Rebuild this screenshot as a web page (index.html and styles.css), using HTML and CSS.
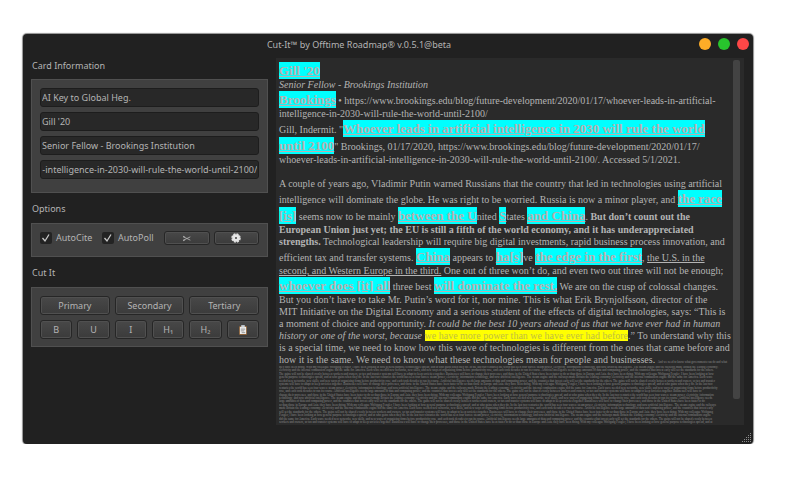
FILE: index.html
```html
<!DOCTYPE html>
<html lang="en">
<head>
<meta charset="utf-8">
<title>Cut-It</title>
<link rel="stylesheet" href="styles.css">
</head>
<body>
<main class="window">
  <header class="titlebar">
    <h1 class="title">Cut-It™ by Offtime Roadmap® v.0.5.1@beta</h1>
    <div class="controls">
      <button class="dot amber" aria-label="Minimize"></button>
      <button class="dot green" aria-label="Maximize"></button>
      <button class="dot red" aria-label="Close"></button>
    </div>
  </header>
  <div class="content">
    <div class="sidebar">
      <h2 class="heading">Card Information</h2>
      <section class="panel fields">
        <input class="field" aria-label="Tag" value="AI Key to Global Heg.">
        <input class="field" aria-label="Author" value="Gill '20">
        <input class="field" aria-label="Credentials" value="Senior Fellow - Brookings Institution">
        <input class="field" id="link" aria-label="Link" value="al-intelligence-in-2030-will-rule-the-world-until-2100/">
      </section>
      <h2 class="heading">Options</h2>
      <section class="panel options">
        <label class="check"><input type="checkbox" checked>AutoCite</label>
        <label class="check"><input type="checkbox" checked>AutoPoll</label>
        <button class="btn slim" aria-label="Cut">
          <svg width="10" height="7" viewBox="0 0 12 8" fill="none" stroke="#b4b4b4"><path d="M3.5 2.8 10 6M3.5 5.2 10 2"/><path d="M1.5 1.5 3.5 2.8M1.5 6.5 3.5 5.2" stroke-width="1.6"/></svg>
        </button>
        <button class="btn slim" aria-label="Settings">
          <svg width="10" height="10" viewBox="0 0 10 10"><circle cx="5" cy="5" r="4" fill="none" stroke="#dcdcdc" stroke-width="1.6" stroke-dasharray="2.1 1.04"/><circle cx="5" cy="5" r="2.4" fill="none" stroke="#e6e6e6" stroke-width="2.8"/></svg>
        </button>
      </section>
      <h2 class="heading">Cut It</h2>
      <section class="panel cuts">
        <div class="row">
          <button class="btn">Primary</button>
          <button class="btn">Secondary</button>
          <button class="btn">Tertiary</button>
        </div>
        <div class="row">
          <button class="btn">B</button>
          <button class="btn">U</button>
          <button class="btn">I</button>
          <button class="btn">H₁</button>
          <button class="btn">H₂</button>
          <button class="btn" aria-label="Paste">
            <svg width="8" height="10" viewBox="0 0 9 11"><rect x="0" y="1" width="9" height="10" rx="1" fill="#8a6038"/><path d="M1 2H8V10H1Z" fill="#eee"/><path d="M2.5 0H6.5V2.5H2.5Z" fill="#c9d0d6"/><path d="M2 4.5H7M2 6.5H6M3 8.5H7" stroke="#777" stroke-width=".8"/></svg>
          </button>
        </div>
      </section>
    </div>
    <article class="document">
      <div class="text">
        <p class="tall"><mark>Gill '20</mark></p>
        <p><i>Senior Fellow - Brookings Institution</i></p>
        <p class="tall"><mark>Brookings</mark> • https://www.brookings.edu/blog/future-development/2020/01/17/whoever-leads-in-artificial-</p>
        <p>intelligence-in-2030-will-rule-the-world-until-2100/</p>
        <p class="tall">Gill, Indermit. "<mark>Whoever leads in artificial intelligence in 2030 will rule the world</mark></p>
        <p class="tall"><mark>until 2100</mark>" Brookings, 01/17/2020, https://www.brookings.edu/blog/future-development/2020/01/17/</p>
        <p>whoever-leads-in-artificial-intelligence-in-2030-will-rule-the-world-until-2100/. Accessed 5/1/2021.</p>
        <p><br></p>
        <p>A couple of years ago, Vladimir Putin warned Russians that the country that led in technologies using artificial</p>
        <p class="tall">intelligence will dominate the globe. He was right to be worried. Russia is now a minor player, and <mark>the race</mark></p>
        <p class="tall"><mark>[is]</mark> seems now to be mainly <mark>between the U</mark>nited <mark>S</mark>tates <mark>and China</mark>. <b>But don’t count out the</b></p>
        <p><b>European Union just yet; the EU is still a fifth of the world economy, and it has underappreciated</b></p>
        <p><b>strengths.</b> Technological leadership will require big digital investments, rapid business process innovation, and</p>
        <p class="tall">efficient tax and transfer systems. <mark>China</mark> appears to <mark>ha[s]</mark>ve <mark>the edge in the first</mark>, <u>the U.S. in the</u></p>
        <p><u>second, and Western Europe in the third.</u> One out of three won’t do, and even two out three will not be enough;</p>
        <p class="tall"><mark>whoever does [it] all</mark> three best <mark>will dominate the rest.</mark> We are on the cusp of colossal changes.</p>
        <p>But you don’t have to take Mr. Putin’s word for it, nor mine. This is what Erik Brynjolfsson, director of the</p>
        <p>MIT Initiative on the Digital Economy and a serious student of the effects of digital technologies, says: “This is</p>
        <p>a moment of choice and opportunity. <i>It could be the best 10 years ahead of us that we have ever had in human</i></p>
        <p><i>history or one of the worst, because </i><span class="pick">we have more power than we have ever had before</span>.” To understand why this</p>
        <p>is a special time, we need to know how this wave of technologies is different from the ones that came before and</p>
        <p>how it is the same. We need to know what these technologies mean for people and businesses. <span class="tiny">And we need to know what governments can do and what</span></p>
        <div class="tiny rest" id="rest"></div>
      </div>
      <div class="scrollbar"><div class="thumb"></div></div>
    </article>
  </div>
  <svg class="grip" width="10" height="10" viewBox="0 0 10 10" fill="#8a8a8a"><path d="M8 0h1v1h-1zM8 2h1v1h-1zM6 2h1v1h-1zM8 4h1v1h-1zM6 4h1v1h-1zM4 4h1v1h-1zM8 6h1v1h-1zM6 6h1v1h-1zM4 6h1v1h-1zM2 6h1v1h-1zM8 8h1v1h-1zM6 8h1v1h-1zM4 8h1v1h-1zM2 8h1v1h-1zM0 8h1v1h-1z"/></svg>
</main>
<script src="document.js"></script>
</body>
</html>
```
FILE: document.js
```js
// Fills the shrunken, uncut remainder of the card, one paragraph per line.
const sentences = [
  "they have been doing. With my colleague Wolfgang Fengler, I have been looking at how general purpose technologies spread, and at who gains when they do.",
  "In the last two centuries the world has seen four waves: steam power, electricity, information technology, and now artificial intelligence.",
  "The steam engine and the railways made Britain the leading economy; electricity and the internal combustion engine did the same for America.",
  "Each wave needed new networks, new skills, and new ways of organizing firms before productivity rose, and each took decades to run its course.",
  "Artificial intelligence needs large amounts of data and computing power, and the countries that invest early will set the standards for the others.",
  "The gains will not be shared evenly between workers and owners, so tax and transfer systems will have to adapt to keep societies together.",
  "Businesses will have to change their processes, and those in the United States have been faster to do so than those in Europe and Asia."
];
const words = sentences.join(" ").split(" ");
const rest = document.getElementById("rest");
let next = 0;
for (let row = 0; row < 17; row++) {
  let line = "";
  while (line.length < 358) line += words[next++ % words.length] + " ";
  const p = document.createElement("div");
  p.textContent = line.trim();
  rest.append(p);
}

// Keeps the end of a long link in view.
const link = document.getElementById("link");
link.scrollLeft = link.scrollWidth;
```
FILE: styles.css
```css
*{box-sizing:border-box}
body{margin:0;background:#fff;padding:34px 47px 0 23px;font:9px/12px "Noto Sans",sans-serif;color:#b4b4b4}
h1,h2,p{margin:0;font-size:inherit;font-weight:normal}
button,input{font:inherit;color:inherit;margin:0;padding:0}
.window{position:relative;background:#212121;border-radius:4px;padding-bottom:19px;box-shadow:0 0 1px 1px #00000070}
.titlebar{display:grid;grid-template-columns:1fr auto 1fr;height:24px;padding:0 4px 0 0}
.title{grid-column:2;padding:5px 54px 0 0}
.controls{display:flex;justify-content:flex-end;gap:7px;padding-top:4px}
.dot{width:12px;height:12px;border:0;border-radius:50%}
.amber{background:#fdac27}
.green{background:#28c42d}
.red{background:#fd4747}
.content{display:flex;gap:8px;padding:0 9px 0 8px}
.sidebar{flex:0 0 237px}
.heading{height:30px;padding:10px 0 0 1px}
.heading:first-child{height:21px;padding-top:2px}
.panel{background:#404040;border:1px solid #505050;padding:8px}
.fields{display:grid;gap:5px;height:114px;align-content:start}
.field{width:100%;height:19px;padding:0 1px;background:#282828;border:1px solid #1d1d1d;border-radius:3px}
.options{display:flex;align-items:flex-start;gap:4px;height:34px;padding-top:7px}
.check{display:flex;align-items:center;gap:4px;flex:0 0 58px;height:14px;white-space:nowrap}
.check input{appearance:none;width:12px;height:12px;background:#232323 url("data:image/svg+xml,%3Csvg xmlns='http://www.w3.org/2000/svg' viewBox='0 0 12 12'%3E%3Cpath d='M2.5 6 5 9 9 2.5' fill='none' stroke='%23c8c8c8' stroke-width='1.3'/%3E%3C/svg%3E");border-radius:2px}
.btn{flex:1 1 0;height:19px;display:flex;align-items:center;justify-content:center;background:linear-gradient(#484848,#3b3b3b);border:1px solid #262626;border-radius:3px;box-shadow:inset 0 0 0 1px #505050}
.slim{height:14px}
.cuts{display:grid;gap:5px;height:60px;align-content:start}
.row{display:flex;gap:5px}
.document{flex:1;min-width:0;display:flex;background:#2a2a2a}
.text{flex:1;min-width:0;padding:4px 0 1px 3px;font:10px/12px "Liberation Serif",serif;white-space:nowrap;color:#b4b4b4}
.text p{height:12px}
.text .tall{height:17px;line-height:17px}
mark{background:#0ff;color:#b8b0b0;font-size:13px;font-weight:bold;text-decoration:underline;padding:1px 0}
.pick{background:#ff0;color:#c0c040}
.text .tiny{font-size:3px;line-height:3px;color:#8c8c8c}
.rest{display:flex;flex-direction:column;justify-content:space-between;height:58px;overflow:hidden}
.scrollbar{flex:0 0 11px;padding-top:2px}
.thumb{width:7px;height:93%;background:#434343;border-radius:2px}
.grip{position:absolute;right:1px;bottom:1px}
```
